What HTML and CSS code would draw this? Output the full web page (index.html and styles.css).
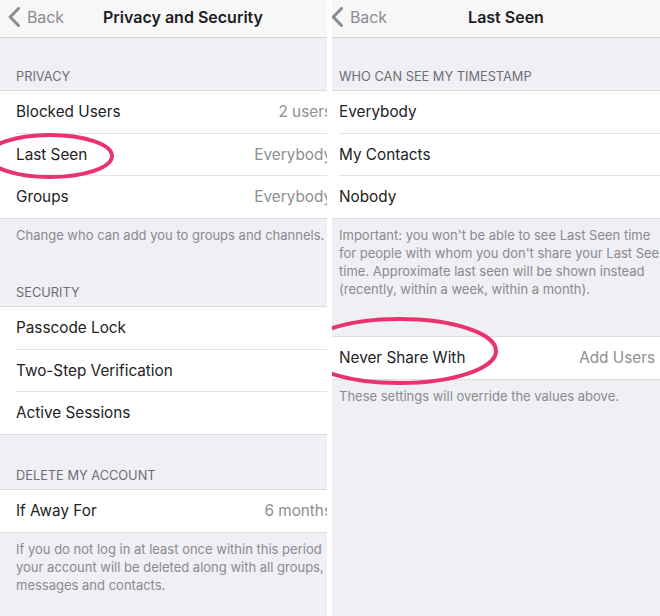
FILE: index.html
```html
<!DOCTYPE html>
<html lang="en">
<head>
<meta charset="utf-8">
<title>Privacy and Security / Last Seen</title>
<link rel="stylesheet" href="styles.css">
</head>
<body>
<div class="page">
  <section class="panel panel-left">
    <div class="screen">
      <header class="nav">
        <span class="back"><svg class="chevron" viewBox="0 0 12 20" width="12" height="20"><path d="M10.5 1.5 L2.2 10 L10.5 18.5" fill="none" stroke="currentColor" stroke-width="3" stroke-linecap="round" stroke-linejoin="round"/></svg>Back</span>
        <h1 class="title">Privacy and Security</h1>
        <span></span>
      </header>
      <div class="section-header">PRIVACY</div>
      <ul class="group">
        <li class="row"><span class="label">Blocked Users</span><span class="value">2 users</span></li>
        <li class="row"><span class="label">Last Seen</span><span class="value">Everybody</span></li>
        <li class="row"><span class="label">Groups</span><span class="value">Everybody</span></li>
      </ul>
      <p class="footer">Change who can add you to groups and channels.</p>
      <div class="section-header">SECURITY</div>
      <ul class="group">
        <li class="row"><span class="label">Passcode Lock</span></li>
        <li class="row"><span class="label">Two-Step Verification</span></li>
        <li class="row"><span class="label">Active Sessions</span></li>
      </ul>
      <div class="section-header section-header-spaced">DELETE MY ACCOUNT</div>
      <ul class="group">
        <li class="row"><span class="label">If Away For</span><span class="value">6 months</span></li>
      </ul>
      <p class="footer">If you do not log in at least once within this period<br>your account will be deleted along with all groups,<br>messages and contacts.</p>
    </div>
    <svg class="annotation" viewBox="0 0 327 616" width="327" height="616"><ellipse cx="50" cy="156" rx="62" ry="21" fill="none" stroke="#e8336f" stroke-width="4"/></svg>
  </section>
  <section class="panel panel-right">
    <div class="screen screen-shifted">
      <header class="nav">
        <span class="back"><svg class="chevron" viewBox="0 0 12 20" width="12" height="20"><path d="M10.5 1.5 L2.2 10 L10.5 18.5" fill="none" stroke="currentColor" stroke-width="3" stroke-linecap="round" stroke-linejoin="round"/></svg>Back</span>
        <h1 class="title">Last Seen</h1>
        <span></span>
      </header>
      <div class="section-header">WHO CAN SEE MY TIMESTAMP</div>
      <ul class="group">
        <li class="row"><span class="label">Everybody</span></li>
        <li class="row"><span class="label">My Contacts</span></li>
        <li class="row"><span class="label">Nobody</span></li>
      </ul>
      <p class="footer">Important: you won't be able to see Last Seen time<br>for people with whom you don't share your Last Seen<br>time. Approximate last seen will be shown instead<br>(recently, within a week, within a month).</p>
      <ul class="group group-spaced">
        <li class="row"><span class="label">Never Share With</span><span class="value">Add Users</span></li>
      </ul>
      <p class="footer">These settings will override the values above.</p>
    </div>
    <svg class="annotation" viewBox="0 0 328 616" width="328" height="616"><ellipse cx="67.5" cy="351" rx="96.5" ry="32" fill="none" stroke="#e8336f" stroke-width="4"/></svg>
  </section>
</div>
</body>
</html>
```

FILE: styles.css
```css
html, body {
  margin: 0;
  padding: 0;
  background: #ffffff;
}

body {
  font-family: Inter, "Liberation Sans", Arial, sans-serif;
  -webkit-font-smoothing: antialiased;
}

.page {
  display: flex;
  gap: 5px;
  width: 660px;
  height: 616px;
}

.panel {
  position: relative;
  overflow: hidden;
  height: 616px;
  background: #efeff4;
}

.panel-left { width: 327px; }
.panel-right { width: 328px; }

.screen {
  width: 366px;
}

.screen-shifted {
  margin-left: -9px;
}

.nav {
  display: grid;
  grid-template-columns: 1fr auto 1fr;
  align-items: center;
  height: 34px;
  padding-bottom: 3px;
  background: #f7f7f8;
  border-bottom: 1px solid #d4d4d8;
}

.back {
  display: flex;
  align-items: center;
  gap: 7px;
  padding-left: 8px;
  color: #8c8c91;
  font-size: 16px;
  letter-spacing: -0.1px;
}

.chevron {
  display: block;
  color: #8c8c91;
}

.title {
  margin: 0;
  font-size: 16px;
  font-weight: 600;
  color: #1d1d1f;
  white-space: nowrap;
}

.section-header {
  padding: 31px 16px 5px;
  font-size: 12.8px;
  line-height: 16px;
  color: #6e6e73;
  white-space: nowrap;
}

.section-header-spaced {
  padding-top: 33.5px;
}

.group {
  list-style: none;
  margin: 0;
  padding: 0 0 0 16px;
  background: #ffffff;
  border-top: 1px solid #dcdce0;
  border-bottom: 1px solid #dcdce0;
}

.group-spaced {
  margin-top: 28px;
}

.row {
  display: flex;
  align-items: center;
  justify-content: space-between;
  height: 41.5px;
  padding-right: 34px;
  border-bottom: 1px solid #e4e4e8;
  font-size: 15.3px;
  color: #222224;
  white-space: nowrap;
}

.row:last-child {
  border-bottom: none;
}

.value {
  color: #8e8e93;
}

.footer {
  margin: 0;
  padding: 7.5px 16px 10px;
  font-size: 13px;
  line-height: 18px;
  color: #8a8a8f;
  white-space: nowrap;
}

.annotation {
  position: absolute;
  left: 0;
  top: 0;
  pointer-events: none;
}
```
